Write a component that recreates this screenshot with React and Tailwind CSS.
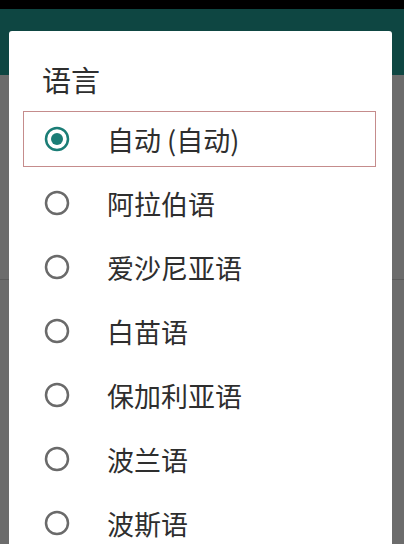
import { useState } from "react";

const languages = ["自动 (自动)", "阿拉伯语", "爱沙尼亚语", "白苗语", "保加利亚语", "波兰语", "波斯语"];

function Radio({ checked }) {
  return (
    <svg width="26" height="26" viewBox="0 0 26 26" className="shrink-0">
      <circle
        cx="13"
        cy="13"
        r="11"
        fill="none"
        stroke={checked ? "#1b7d76" : "#6a6a6a"}
        strokeWidth="2.5"
      />
      {checked && <circle cx="13" cy="13" r="6" fill="#1b7d76" />}
    </svg>
  );
}

export default function App() {
  const [selected, setSelected] = useState(0);

  return (
    <div
      className="relative w-[404px] h-[544px] overflow-hidden bg-[#6c6c6c] flex flex-col"
      style={{ fontFamily: '"Noto Sans CJK SC", "Noto Sans", sans-serif' }}
    >
      <div className="h-[9px] bg-black" />
      <div className="h-[66px] bg-[#0e4642]" />
      <div className="h-[204px]" />
      <div className="h-px bg-[#5c5c5c]" />

      {/* dialog */}
      <div className="absolute left-[9px] top-[31px] w-[383px] h-[560px] bg-white rounded-[3px]">
        <div className="h-[76px] pt-[20px] pl-[33px] flex items-center">
          <h2 className="text-[29px] leading-none text-[#2e2e2e]">语言</h2>
        </div>
        <ul>
          {languages.map((name, i) => (
            <li key={name} className="h-[64px] py-[4px] pl-[14px] pr-[16px]">
              <button
                onClick={() => setSelected(i)}
                className={`w-full h-full flex items-center pl-[20px] gap-[37px] border-[1.5px] ${
                  selected === i ? "border-[#c58c8c]" : "border-transparent"
                }`}
              >
                <Radio checked={selected === i} />
                <span className="text-[27px] leading-none text-[#2e2e2e]">{name}</span>
              </button>
            </li>
          ))}
        </ul>
      </div>
    </div>
  );
}
